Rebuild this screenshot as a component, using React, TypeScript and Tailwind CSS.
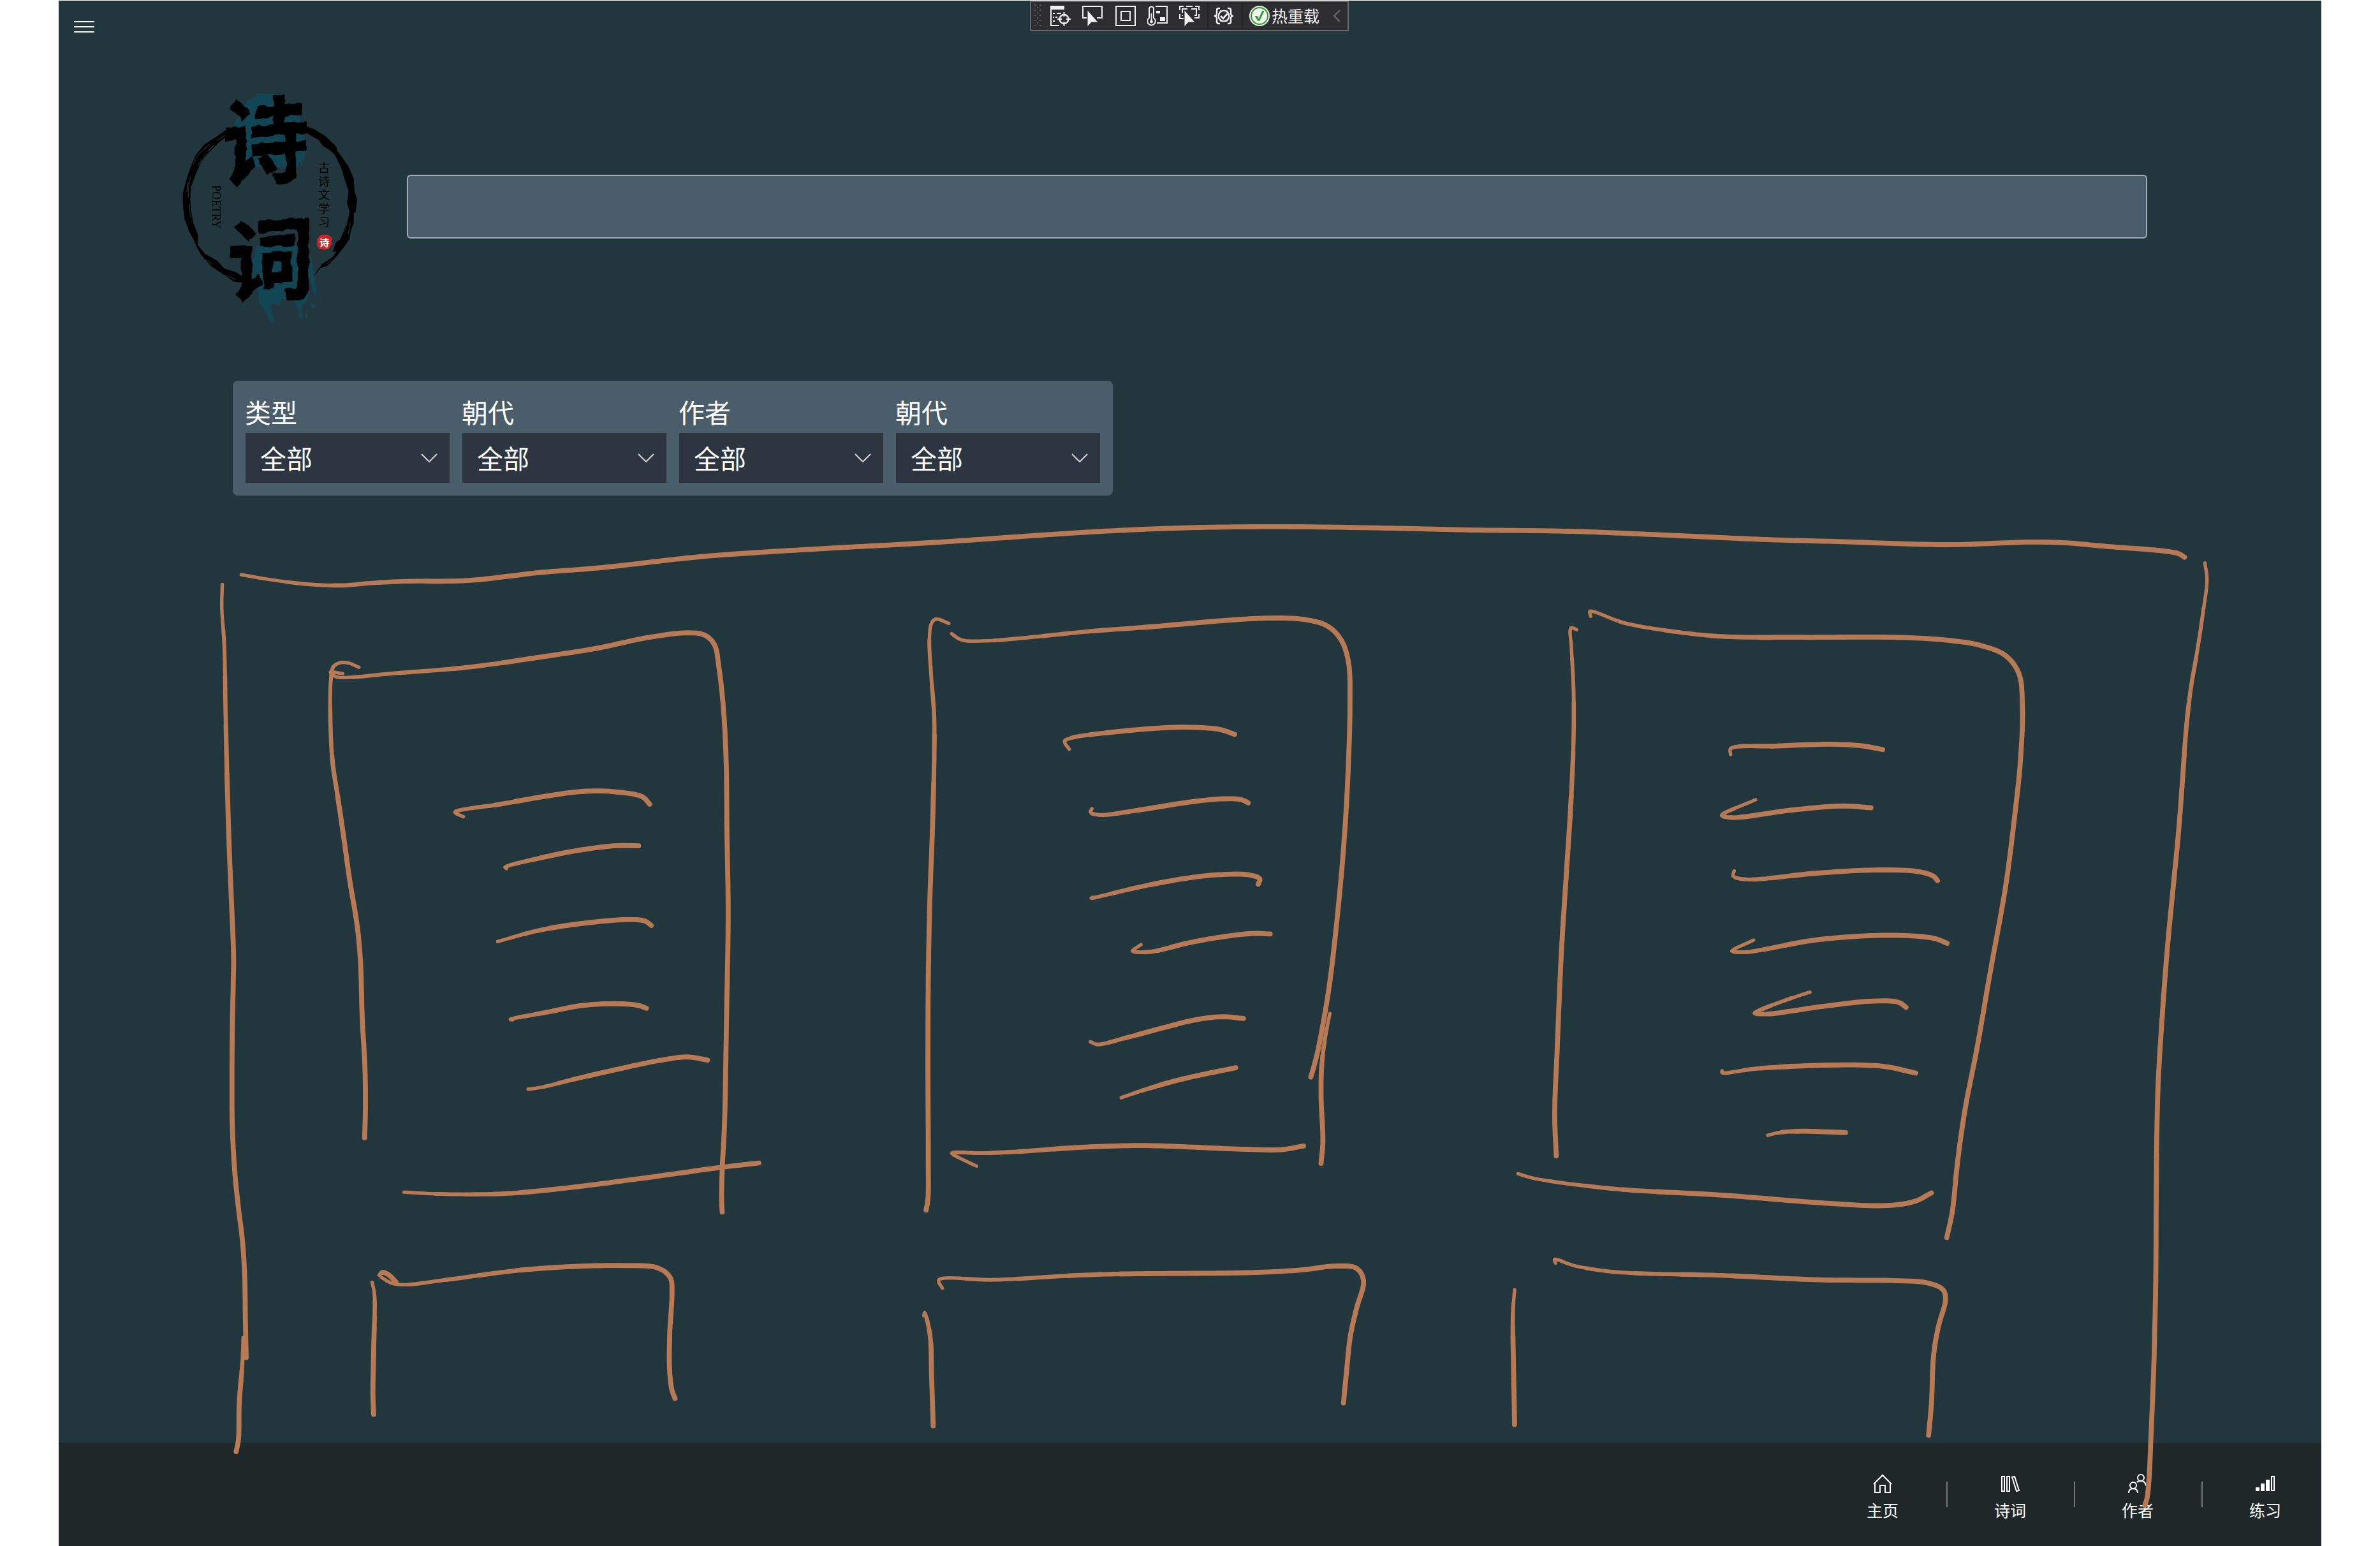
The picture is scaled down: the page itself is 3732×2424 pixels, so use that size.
import React from "react";

type Pt = [number, number];

/* ---------- Ink annotations ---------- */

// Each drawing tile has its own origin and scale; strokes may span several tiles.
const tile = (ox: number, oy: number, sx: number, sy: number) => (s: string): Pt[] =>
  s.split(";").map((p) => {
    const [x, y] = p.trim().split(",").map(Number);
    return [ox + x / sx, oy + y / sy];
  });

const A = tile(300, 800, 1.568, 1.4255);
const B = tile(1350, 800, 1.7422, 1.4255);
const C = tile(2300, 800, 1.2544, 1.4255);
const D = tile(300, 1750, 0.82526, 2.3264);
const E = tile(2200, 1750, 1.12, 2.3264);

const strokes: Pt[][] = [
  // outer frame
  [
    ...A("76,166;75,220;81,300;84,440;88,600;93,750;99,880;104,1000;103,1060;101,1150;100,1280;101,1380;107,1480;116,1560"),
    ...D("66,450;69,580;70,750;71,881"),
  ],
  D("67,808;66,900;62,1050;61,1180;58,1224"),
  [
    ...A("123,144;180,153;280,165;370,168;440,163;520,159;680,157;860,139;1000,129;1250,104;1400,94;1568,85"),
    ...B("200,72;640,48;900,39;1180,37;1500,41"),
    ...C("0,44;200,47;380,55;600,66;730,70;860,75;950,77;1060,73;1110,71;1180,73;1260,81;1370,91;1400,97;1412,105"),
  ],
  [
    ...C("1452,118;1456,155;1448,230;1436,320;1424,400;1415,490;1408,600;1400,720;1388,860;1378,980;1368,1130;1360,1280;1357,1420;1356,1568"),
    ...E("1322,600;1320,800;1318,950;1314,1150;1310,1330;1307,1390;1303,1420"),
  ],
  // first card
  A("412,351;385,341;365,341;349,350;343,380;342,470;347,560;360,640;373,720;390,830;408,930;416,1010;420,1130;427,1250;428,1340;426,1403"),
  [
    ...A("372,365;342,362;355,372;400,373;480,366;680,351;860,328;1000,308;1120,285;1220,274;1262,279;1286,300;1297,350;1308,440;1315,560;1317,720;1320,900;1316,1130;1311,1370;1305,1480;1304,1550"),
    ...D("687,350"),
  ],
  A("669,685;648,675;760,657;880,638;970,628;1050,630;1110,641;1127,657"),
  A("775,801;772,798;850,779;940,762;1040,750;1100,750"),
  A("753,964;850,940;940,926;1070,915;1115,918;1131,928"),
  A("790,1139;785,1138;880,1121;960,1107;1050,1103;1100,1107;1119,1113"),
  A("828,1294;860,1290;940,1272;1050,1249;1150,1230;1220,1222;1269,1229"),
  A("523,1524;600,1528;700,1529;780,1527;920,1515;1150,1488;1300,1469;1395,1459"),
  // second card
  B("240,253;205,243;193,252;187,290;192,370;200,460;200,560;195,720;188,880;184,1050;183,1250;184,1450;183,1540;178,1564"),
  B("248,276;275,290;340,292;450,285;620,271;800,260;1000,246;1120,241;1210,244;1275,259;1312,290;1332,340;1336,430;1330,600;1318,760;1300,920;1280,1060;1262,1150;1245,1220;1229,1267"),
  B("1281,1125;1268,1180;1259,1240;1257,1310;1262,1410;1257,1460"),
  B("569,534;556,517;570,510;700,495;870,485;980,490;1021,501"),
  B("631,667;627,675;650,681;760,670;900,652;990,645;1040,647;1058,654"),
  B("633,865;629,867;750,844;870,825;970,815;1060,815;1090,824;1085,836"),
  B("765,971;742,985;790,987;900,966;1000,952;1070,946;1118,947"),
  B("627,1188;645,1194;720,1180;820,1158;920,1138;990,1132;1045,1136"),
  B("711,1313;780,1294;880,1271;1024,1246"),
  B("316,1466;280,1452;248,1437;330,1437;420,1434;600,1424;770,1420;1040,1428;1150,1429;1209,1421"),
  // third card
  C("216,267;205,263;206,310;210,400;210,510;205,650;196,810;186,990;178,1200;173,1350;176,1443"),
  [
    ...C("244,237;242,226;310,252;400,270;500,282;660,284;840,284;940,290;1010,302;1060,325;1086,365;1093,440;1089,560;1077,690;1060,840;1030,1030;1004,1200;980,1340;965,1460;955,1568"),
    ...E("955,443"),
  ],
  C("519,546;519,533;610,527;720,523;780,527;818,535"),
  C("568,647;502,682;520,687;640,670;740,661;795,665"),
  C("526,806;524,818;550,825;690,811;810,804;890,808;918,818;926,828"),
  C("564,961;522,985;545,988;690,960;830,950;920,957;945,968"),
  C("675,1077;620,1098;567,1124;590,1126;700,1109;800,1097;850,1100;864,1111"),
  C("502,1253;502,1257;570,1248;720,1240;820,1243;883,1258"),
  C("592,1397;620,1390;660,1388;745,1391"),
  E("202,210;230,227;370,265;560,288;740,317;850,326;900,310;928,280"),
  // second row of cards
  D("234,606;237,650;236,850;235,1020;236,1088"),
  D("243,580;247,570;255,578;265,606"),
  D("246,588;258,608;275,615;330,597;440,558;560,545;605,555;620,590;622,640;619,800;619,930;622,1000;626,1030"),
  D("972,628;967,598;1040,597;1170,578;1380,570;1440,560;1480,547;1508,555;1517,600;1508,700;1500,800;1495,930;1491,1046"),
  D("948,728;949,718;956,800;958,950;960,1130"),
  E("268,536;266,522;300,545;370,568;560,581;730,597;860,600;920,608;948,632;953,665;940,770;932,870;928,1050;923,1164"),
  E("196,633;193,720;194,900;196,1125"),
];

const lerp = (a: Pt, b: Pt, t: number): Pt => [a[0] + (b[0] - a[0]) * t, a[1] + (b[1] - a[1]) * t];
const dist = (a: Pt, b: Pt) => Math.max(0.5, Math.hypot(a[0] - b[0], a[1] - b[1]));

// Centripetal Catmull-Rom sampling keeps hooks tight, without overshoot.
function smooth(pts: Pt[]): Pt[] {
  const n = pts.length;
  const ext: Pt[] = [lerp(pts[0], pts[1], -1), ...pts, lerp(pts[n - 1], pts[n - 2], -1)];
  const out: Pt[] = [];
  for (let i = 0; i < n - 1; i++) {
    const [p0, p1, p2, p3] = [ext[i], ext[i + 1], ext[i + 2], ext[i + 3]];
    const t1 = Math.sqrt(dist(p0, p1));
    const t2 = t1 + Math.sqrt(dist(p1, p2));
    const t3 = t2 + Math.sqrt(dist(p2, p3));
    const steps = Math.max(3, Math.ceil(dist(p1, p2) / 8));
    for (let k = 0; k < steps; k++) {
      const t = t1 + ((t2 - t1) * k) / steps;
      const a1 = lerp(p0, p1, t / t1);
      const a2 = lerp(p1, p2, (t - t1) / (t2 - t1));
      const a3 = lerp(p2, p3, (t - t2) / (t3 - t2));
      const b1 = lerp(a1, a2, t / t2);
      const b2 = lerp(a2, a3, (t - t1) / (t3 - t1));
      out.push(lerp(b1, b2, (t - t1) / (t2 - t1)));
    }
  }
  out.push(pts[n - 1]);
  return out;
}

// Splits a stroke into runs of growing width, like pen pressure building up.
function pieces(pts: Pt[]) {
  const s = smooth(pts);
  const widths = [5.4, 6, 6.6, 7.2, 7.8];
  const res: { w: number; pts: Pt[] }[] = [];
  let cur = -1;
  s.forEach((p, i) => {
    const f = Math.max(i / s.length, i / 120);
    const b = Math.min(4, Math.floor(f * 12));
    if (b !== cur) {
      if (res.length) res[res.length - 1].pts.push(p);
      res.push({ w: widths[b], pts: [p] });
      cur = b;
    } else res[res.length - 1].pts.push(p);
  });
  return res;
}

function Ink() {
  return (
    <svg
      className="pointer-events-none absolute inset-0"
      width="3732"
      height="2424"
      viewBox="0 0 3732 2424"
      fill="none"
      stroke="#b87a55"
      strokeLinecap="round"
      strokeLinejoin="round"
    >
      {strokes.flatMap((st, i) =>
        pieces(st).map((p, j) => (
          <polyline
            key={`${i}-${j}`}
            strokeWidth={p.w}
            points={p.pts.map(([x, y]) => `${x.toFixed(1)},${y.toFixed(1)}`).join(" ")}
          />
        )),
      )}
    </svg>
  );
}

/* ---------- Debug toolbar ---------- */

const Ico = ({ children }: { children: React.ReactNode }) => (
  <svg width="32" height="32" viewBox="0 0 32 32" fill="none" stroke="#f0f0f0" strokeWidth="2" className="shrink-0">
    {children}
  </svg>
);

const Cursor = () => <path d="M8.500 7.500v24.500l6-6.500h9.500z" fill="#f0f0f0" stroke="none" />;

function DebugBar() {
  return (
    <div className="absolute left-[1615px] top-px flex h-12 w-[500px] items-center border-2 border-[#686868] bg-[#2d2d30]">
      <svg width="12" height="36" viewBox="0 0 12 36" className="ml-[5px] shrink-0" fill="#5f5f62">
        {[0, 8, 16, 24, 32].map((y) => (
          <React.Fragment key={y}>
            <rect x="0" y={y} width="2" height="2" />
            <rect x="8" y={y} width="2" height="2" />
            <rect x="4" y={y + 4} width="2" height="2" />
          </React.Fragment>
        ))}
      </svg>
      <div className="ml-[13px] flex items-center gap-[18px]">
        <Ico>
          <path d="M0 0h22v6H0z" fill="#f0f0f0" stroke="none" />
          <path d="M1 4v27h13M4 12h3M10 12h7M4 18h2M8 18h3M4 24h3" />
          <circle cx="21.5" cy="21" r="7" strokeWidth="2.4" />
          <path d="M21.5 10v7M21.5 25v7M11 21h7M25 21h7" />
        </Ico>
        <Ico>
          <path d="M7 19H1V1h30v18h-8" />
          <Cursor />
        </Ico>
        <div className="mx-0.5 flex">
          <Ico>
            <path d="M1 1h30v30H1zM9 9h14v14H9z" />
          </Ico>
        </div>
        <div className="-ml-0.5 flex">
          <Ico>
            <path d="M13 1h18v26H15" />
            <path d="M14 8h6v4h-6zM20 18h8v6h-8z" fill="#f0f0f0" stroke="none" />
            <path d="M3 19V5a3.5 3.5 0 0 1 7 0v14a6.3 6.3 0 1 1-7 0z" />
            <path d="M6.5 12v12" />
            <circle cx="6.5" cy="25" r="2.4" fill="#f0f0f0" stroke="none" />
          </Ico>
        </div>
        <Ico>
          <path d="M1 7V1h6M11 1h10M25 1h6v6M31 13v6h-7M1 13v7h6M5 11V5h8M19 5h8v10h-3M5 15v1" />
          <Cursor />
        </Ico>
      </div>
      <div className="ml-3 h-10 w-0.5 shrink-0 bg-[#222224]" />
      <svg width="32" height="32" viewBox="0 0 32 32" fill="none" stroke="#f0f0f0" strokeWidth="2.4" className="ml-[8px] shrink-0">
        <path d="M10 4H8Q5 4 5 7v5q0 4-4 4 4 0 4 4v5q0 3 3 3h2M22 4h2q3 0 3 3v5q0 4 4 4-4 0-4 4v5q0 3-3 3h-2" />
        <circle cx="16" cy="16" r="8.4" />
        <path d="M11 16l4 4 7-8" strokeWidth="2.8" />
        <path d="M10 8l2 1M22 8l-2 1M10 24l2-1M22 24l-2-1" />
      </svg>
      <div className="ml-[12px] h-10 w-0.5 shrink-0 bg-[#222224]" />
      <svg width="32" height="32" viewBox="0 0 32 32" fill="none" className="ml-[10px] shrink-0">
        <circle cx="16" cy="16" r="16" fill="#f0f0f0" />
        <circle cx="16" cy="16" r="13" stroke="#2f9b2f" strokeWidth="2" />
        <path d="M8.5 16h4l2.300 4.500L20 8h3.500L16 24h-2.500z" fill="#2f9b2f" />
      </svg>
      <span className="-mt-0.5 ml-[3px] shrink-0 text-[25px] leading-8 text-[#f0f0f0]">热重载</span>
      <svg width="12" height="20" viewBox="0 0 12 20" fill="none" stroke="#686868" strokeWidth="2.4" className="ml-[21px] shrink-0">
        <path d="M11 1L2 10l9 9" />
      </svg>
    </div>
  );
}

/* ---------- Logo ---------- */

function Logo() {
  return (
    <svg width="320" height="400" viewBox="0 0 960 1200" className="shrink-0 overflow-visible">
      <defs>
        <filter id="brush" x="-5%" y="-5%" width="110%" height="110%">
          <feTurbulence type="fractalNoise" baseFrequency="0.018" numOctaves="2" seed="4" result="n" />
          <feDisplacementMap in="SourceGraphic" in2="n" scale="26" xChannelSelector="R" yChannelSelector="G" />
        </filter>
      </defs>
      <g fill="#134654">
        <path d="M430 80L525 80 538 110 590 128 600 145 622 150 630 190 634 215 652 235 652 290 660 330 655 372 640 417 628 395 622 425 415 427 360 425 352 400 340 405 342 350 326 330 340 300 322 270 322 215 350 180 360 150 385 110 420 98 425 76z" />
        <path d="M425 796L640 796 675 830 690 880 696 930 703 966 711 1026 704 1036 691 1006 676 950 663 946 663 996 671 1036 659 1060 640 1080 642 1138 627 1138 626 1098 610 1068 582 1038 562 1048 545 1044 537 1075 527 1080 510 1068 495 1068 500 1110 515 1154 490 1156 470 1110 438 1062 430 1000 400 920 393 870 418 850z" />
        <path d="M680 1062l28 20-14 14zM660 1090l6 48-12-6zM728 1040l8 4-10 6zM698 800l6 14-6 6zM592 126l14 12-8 4zM480 66l4 8-6 2z" />
      </g>
      <g fill="#000">
        <path d="M655 232L700 248 750 280 802 330 806 348 830 380 860 425 884 480 888 540 900 580 892 640 884 640 884 690 870 725 864 765 840 800 800 850 760 890 730 900 695 938 735 882 785 850 803 822 785 825 800 780 822 765 835 730 850 690 864 635 852 595 860 540 840 480 825 430 795 368 770 345 740 328 720 300 655 262z" />
        <path d="M330 232L285 250 245 278 180 320 140 370 115 430 95 490 80 550 80 600 88 670 110 730 132 770 145 800 165 838 210 890 270 930 320 965 368 970 378 950 330 920 275 903 240 865 185 835 150 792 152 745 130 690 120 640 115 580 118 520 145 450 165 405 200 360 250 310 290 280 335 264z" />
      </g>
      <g fill="none" stroke="#22363d" strokeWidth="3" strokeLinecap="round">
        <path d="M118 470q-14 40-12 100M130 410q20-50 60-75M150 420q20-30 40-55M112 600q-2 40 6 60M180 340l30-24M240 300l60-36M860 650q-6 50-24 84M868 690l-10 50M175 855l40 26M280 935l50 20M750 885l28-22" />
        <path d="M100 540l4-40M200 350l24-26" strokeWidth="5" />
      </g>
      <g
        fontFamily='"Noto Sans CJK SC", sans-serif'
        fontWeight="700"
        fill="#000"
        stroke="#000"
        strokeWidth="5"
        strokeLinejoin="round"
        filter="url(#brush)"
      >
        <text transform="translate(268 490) skewY(-5) scale(1.01 1.12)" fontSize="400">诗</text>
        <text transform="translate(290 1034) skewY(-4) scale(1.02 1.06)" fontSize="400">词</text>
      </g>
      <g fontFamily='"Noto Sans CJK SC", sans-serif' fontSize="54" fill="#000">
        {"古诗文学习".split("").map((c, i) => (
          <text key={i} x="717" y={449 + i * 64} fontWeight="400">
            {c}
          </text>
        ))}
      </g>
      <text
        transform="translate(219 511) rotate(90)"
        fontFamily='"Liberation Serif", serif'
        fontSize="54"
        textLength="204"
        lengthAdjust="spacingAndGlyphs"
        fill="#000"
      >
        POETRY
      </text>
      <path d="M725 748l20-5 22 4 14 12-1 28-10 20-22 8-26-4-11-18 1-26z" fill="#cf2327" />
      <text x="723" y="797" fontFamily='"Noto Sans CJK SC", sans-serif' fontWeight="700" fontSize="46" fill="#fff">
        诗
      </text>
    </svg>
  );
}

/* ---------- Filters ---------- */

function Filter({ label }: { label: string }) {
  return (
    <div className="flex w-80 flex-col">
      <span className="-ml-px h-[60px] text-[41px] leading-[52px] text-white">{label}</span>
      <div className="flex h-[78px] items-center justify-between bg-[#2d3640] pl-[23px] pr-[19px]">
        <span className="-mt-0.5 text-[41px] leading-[52px] text-white">全部</span>
        <svg width="26" height="14" viewBox="0 0 26 14" fill="none" stroke="#d5d7d9" strokeWidth="2">
          <path d="M1 1l12 12L25 1" />
        </svg>
      </div>
    </div>
  );
}

/* ---------- Bottom navigation ---------- */

const navIcons: Record<string, React.ReactNode> = {
  主页: <path d="M2 17L16 3l14 14M4 15v15h8V19h8v11h8V15" />,
  诗词: <path d="M3 5h4v23H3zM11 5h4v23h-4zM19 6l4-1 7 22-4 1z" />,
  作者: (
    <>
      <circle cx="21" cy="7" r="5" />
      <circle cx="9" cy="19" r="5" />
      <path d="M2 31q0-7 7-7t7 7M14.500 14q2.500-2 6.500-2 7 0 8 7.500" />
    </>
  ),
  练习: (
    <>
      <path d="M1 22h6v6H1zM9 16h6v12H9zM17 10h6v18h-6z" fill="#fff" stroke="none" />
      <path d="M26 5h4v22h-4z" />
    </>
  ),
};

function NavItem({ label }: { label: string }) {
  return (
    <div className="flex w-[176px] flex-col items-center">
      <svg width="32" height="32" viewBox="0 0 32 32" fill="none" stroke="#fff" strokeWidth="2">
        {navIcons[label]}
      </svg>
      <span className="mt-[9px] text-[25px] leading-8 text-white">{label}</span>
    </div>
  );
}

export default function App() {
  return (
    <div className="relative h-[2424px] w-[3732px] overflow-hidden bg-white px-[92px] pt-px font-['Noto_Sans_CJK_SC',sans-serif]">
      <div className="flex h-full flex-col bg-[#22363d]">
        <header className="flex h-[119px] flex-col gap-1.5 pl-6 pt-8">
          <div className="h-0.5 w-8 bg-white" />
          <div className="h-0.5 w-8 bg-white" />
          <div className="h-0.5 w-8 bg-white" />
        </header>
        <div className="flex pl-[168px]">
          <Logo />
          <div className="ml-[58px] mt-[154px] h-[100px] w-[2729px] rounded-[6px] border-2 border-[#a3adb2] bg-[#4a5d6a]" />
        </div>
        <div className="ml-[273px] mt-[77px] flex h-[180px] w-[1380px] gap-5 rounded-[8px] bg-[#4a5d6a] px-5 pt-[22px]">
          <Filter label="类型" />
          <Filter label="朝代" />
          <Filter label="作者" />
          <Filter label="朝代" />
        </div>
        <footer className="mt-auto flex h-[162px] justify-end bg-[#1f2729] pt-12">
          {Object.keys(navIcons).map((n, i) => (
            <React.Fragment key={n}>
              {i > 0 && <div className="ml-[12px] mr-[10px] mt-[13px] h-10 w-0.5 bg-[#73787a]" />}
              <NavItem label={n} />
            </React.Fragment>
          ))}
        </footer>
      </div>
      <DebugBar />
      <Ink />
    </div>
  );
}
